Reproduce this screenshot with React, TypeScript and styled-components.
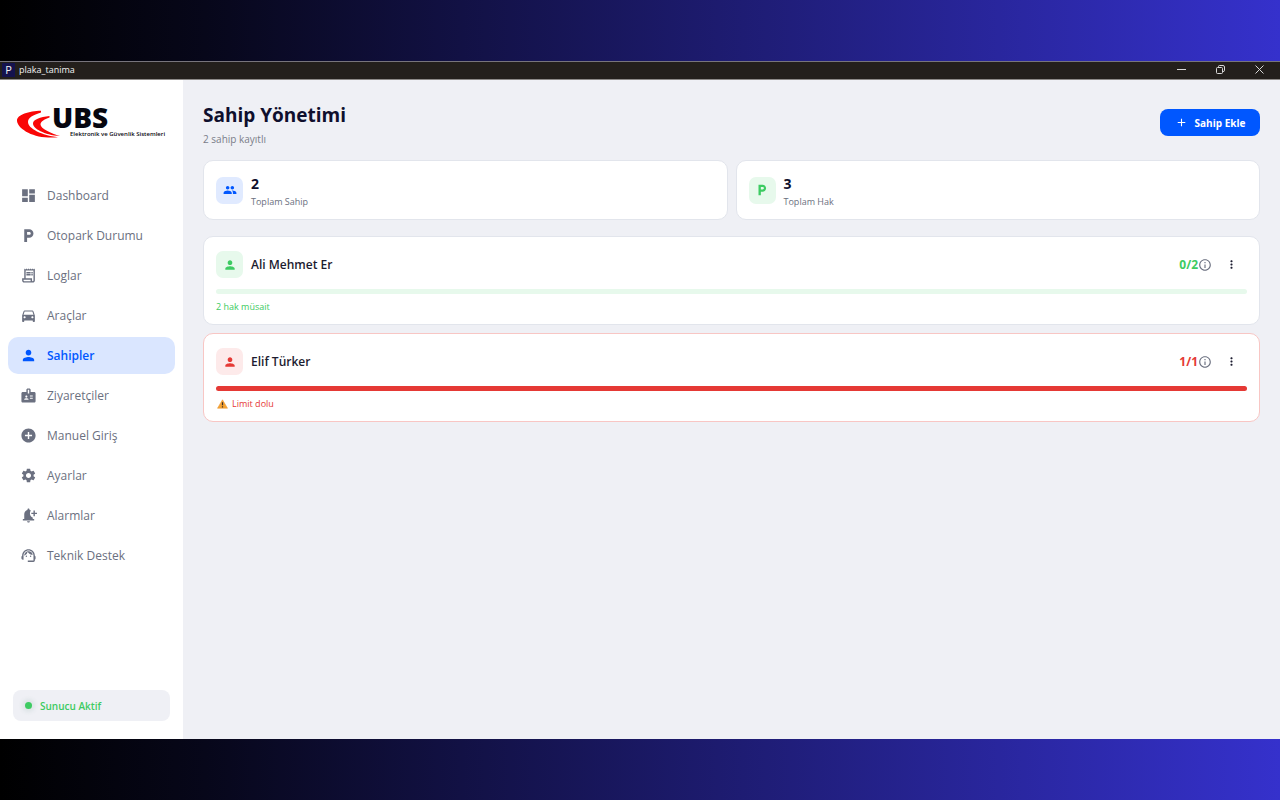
import React from "react";
import styled, { createGlobalStyle, css } from "styled-components";
import {
  MdAdd,
  MdAddCircle,
  MdBadge,
  MdDashboard,
  MdDirectionsCar,
  MdInfoOutline,
  MdLocalParking,
  MdMoreVert,
  MdNotificationAdd,
  MdOutlineReceiptLong,
  MdPeople,
  MdPerson,
  MdSettings,
  MdSupportAgent,
} from "react-icons/md";
import type { IconType } from "react-icons";

const color = {
  ink: "#0f0f2d",
  text: "#1c1c30",
  muted: "#6b7080",
  canvas: "#eff0f5",
  line: "#e2e5ec",
  blue: "#0057ff",
  blueSoft: "#dae6ff",
  green: "#3dcb62",
  greenSoft: "#e7f9ec",
  red: "#e53935",
  redSoft: "#fdeaea",
  redLine: "#f8c6c4",
};

const GlobalStyle = createGlobalStyle`
  *, *::before, *::after { box-sizing: border-box; }
  body {
    margin: 0;
    font-family: "Open Sans", "Noto Sans", sans-serif;
    color: ${color.text};
  }
  h1, h2, p, ul { margin: 0; padding: 0; }
  button { font: inherit; border: 0; background: none; padding: 0; cursor: pointer; }
`;

const Backdrop = styled.div`
  min-height: 100vh;
  display: flex;
  padding: 61px 0;
  background: linear-gradient(90deg, #000000 0%, #07071a 16%, #3531cc 100%);
`;

const AppWindow = styled.div`
  flex: 1;
  min-width: 0;
  display: flex;
  flex-direction: column;
`;

const TitleBar = styled.header`
  height: 19px;
  flex: none;
  display: flex;
  align-items: center;
  justify-content: space-between;
  padding: 0 1px 2px 2px;
  background: #231f1c;
  border-top: 1px solid #77747c;
  border-bottom: 1px solid #8c8987;
  color: #f2f2f2;
`;

const AppName = styled.div`
  display: flex;
  align-items: center;
  gap: 4px;
  font-size: 9px;
  line-height: 14px;
`;

const AppBadge = styled.span`
  width: 13px;
  height: 14px;
  background: #14124e;
  text-align: center;
  font-size: 11px;
  line-height: 14px;
`;

const WindowButtons = styled.div`
  display: flex;
`;

const WindowButton = styled.button`
  width: 39px;
  height: 15px;
  display: grid;
  place-items: center;
  color: #d8d8d8;
`;

const Body = styled.div`
  flex: 1;
  display: flex;
  background: ${color.canvas};
`;

const Sidebar = styled.aside`
  width: 183px;
  flex: none;
  display: flex;
  flex-direction: column;
  background: #ffffff;
`;

const LogoSvg = styled.svg`
  display: block;
  margin: 24px 0 34px 15px;
  overflow: visible;
`;

const NavList = styled.ul`
  list-style: none;
  display: flex;
  flex-direction: column;
  gap: 3px;
  padding: 0 8px;
`;

const NavLink = styled.a<{ $active?: boolean }>`
  height: 37px;
  display: flex;
  align-items: center;
  gap: 10px;
  padding: 0 12px;
  border-radius: 10px;
  font-size: 12px;
  line-height: 16px;
  text-decoration: none;
  color: ${color.muted};
  ${(p) =>
    p.$active &&
    css`
      background: ${color.blueSoft};
      color: ${color.blue};
      font-weight: 600;
    `}
`;

const ServerStatus = styled.div`
  height: 31px;
  margin: auto 13px 18px;
  display: flex;
  align-items: center;
  gap: 8px;
  padding: 0 12px;
  border-radius: 8px;
  background: ${color.canvas};
  color: ${color.green};
  font-size: 10px;
  font-weight: 600;
`;

const StatusDot = styled.span`
  width: 7px;
  height: 7px;
  border-radius: 50%;
  background: ${color.green};
  box-shadow: 0 0 4px 3px rgba(61, 120, 98, 0.1);
`;

const Main = styled.main`
  flex: 1;
  min-width: 0;
  padding: 21px 20px;
`;

const PageHeader = styled.div`
  display: flex;
  align-items: flex-start;
  justify-content: space-between;
  padding-bottom: 11px;
`;

const PageTitle = styled.h1`
  font-size: 19px;
  line-height: 28px;
  font-weight: 700;
  color: ${color.ink};
`;

const PageSubtitle = styled.p`
  font-size: 10px;
  line-height: 20px;
  color: #7a7d89;
`;

const AddButton = styled.button`
  width: 100px;
  height: 27px;
  margin-top: 8px;
  display: flex;
  align-items: center;
  justify-content: center;
  gap: 7px;
  border-radius: 8px;
  background: ${color.blue};
  color: #ffffff;
  font-size: 10px;
  font-weight: 700;
`;

const Stats = styled.section`
  display: grid;
  grid-template-columns: 1fr 1fr;
  gap: 8px;
  margin-bottom: 16px;
`;

const Card = styled.article<{ $danger?: boolean }>`
  background: #ffffff;
  border: 1px solid ${(p) => (p.$danger ? color.redLine : color.line)};
  border-radius: 10px;
  padding: 0 12px;
`;

const StatCard = styled(Card)`
  height: 60px;
  display: flex;
  align-items: center;
  gap: 8px;
`;

const StatText = styled.div`
  padding-top: 6px;
`;

const StatValue = styled.p`
  font-size: 14px;
  line-height: 18px;
  font-weight: 700;
  color: ${color.ink};
`;

const StatLabel = styled.p`
  font-size: 9px;
  line-height: 18px;
  color: ${color.muted};
`;

type Tone = "blue" | "green" | "red";

const IconTile = styled.span<{ $tone: Tone }>`
  width: 27px;
  height: 27px;
  flex: none;
  display: grid;
  place-items: center;
  border-radius: 7px;
  color: ${(p) => color[p.$tone]};
  background: ${(p) =>
    ({ blue: "#e0eaff", green: color.greenSoft, red: color.redSoft })[p.$tone]};
`;

const OwnerList = styled.section`
  display: flex;
  flex-direction: column;
  gap: 8px;
`;

const OwnerCard = styled(Card)`
  height: 89px;
  padding-top: 14px;
`;

const OwnerRow = styled.div`
  display: flex;
  align-items: center;
  gap: 8px;
`;

const OwnerName = styled.h2`
  flex: 1;
  font-size: 12px;
  line-height: 16px;
  font-weight: 600;
`;

const Usage = styled.span<{ $tone: Tone }>`
  display: flex;
  align-items: center;
  font-size: 12px;
  line-height: 16px;
  font-weight: 700;
  color: ${(p) => color[p.$tone]};
`;

const IconButton = styled.button<{ $menu?: boolean }>`
  display: grid;
  place-items: center;
  width: ${(p) => (p.$menu ? 22 : 14)}px;
  height: 20px;
  margin-right: ${(p) => (p.$menu ? 5 : 0)}px;
  color: ${(p) => (p.$menu ? color.text : color.muted)};
`;

const Track = styled.div<{ $tone: Tone }>`
  height: 5px;
  margin-top: 11px;
  overflow: hidden;
  border-radius: 3px;
  background: ${(p) => (p.$tone === "red" ? color.redSoft : color.greenSoft)};
`;

const Fill = styled.div<{ $tone: Tone }>`
  height: 100%;
  background: ${(p) => color[p.$tone]};
`;

const Note = styled.p<{ $tone: Tone }>`
  display: flex;
  align-items: center;
  gap: 4px;
  margin-top: 6px;
  font-size: 9px;
  line-height: 14px;
  color: ${(p) => color[p.$tone]};
`;

const WarningSvg = styled.svg`
  margin-left: 1px;
`;

const Logo = () => (
  <LogoSvg width="152" height="39" viewBox="0 0 152 39" role="img" aria-label="UBS">
    <g fill="#f90606">
      <path d="M26 6.700C14 7 2 10.500 2 16.500C2 24 16 33 33 33.500C37 33.600 40 33.500 43 33.200C27 31.500 13 24.500 13 18C13 13.500 18 11 26 8.500Z" />
      <path d="M34.500 12C25 13 18 15.500 18 19.500C18 24.500 29 31 45 32C36 29.500 25.500 24.500 25.500 20.500C25.500 17.500 29 15.500 34.500 13.500Z" />
    </g>
    <text x="37" y="24" fontSize="28" fontWeight="800" fill="#06060f">UBS</text>
    <text x="55" y="32" fontSize="6" fontWeight="600" fill="#06060f">
      Elektronik ve Güvenlik Sistemleri
    </text>
  </LogoSvg>
);

const WarningIcon = () => (
  <WarningSvg width="11" height="10" viewBox="0 0 22 20" aria-hidden="true">
    <path d="M11 1.500L21 18.500H1Z" fill="#f5a331" stroke="#e8912b" strokeLinejoin="round" />
    <path d="M11 6.500V12.500M11 14.500V17" stroke="#3a2c2c" strokeWidth="2.400" />
  </WarningSvg>
);

const navItems: { label: string; icon: IconType; active?: boolean }[] = [
  { label: "Dashboard", icon: MdDashboard },
  { label: "Otopark Durumu", icon: MdLocalParking },
  { label: "Loglar", icon: MdOutlineReceiptLong },
  { label: "Araçlar", icon: MdDirectionsCar },
  { label: "Sahipler", icon: MdPerson, active: true },
  { label: "Ziyaretçiler", icon: MdBadge },
  { label: "Manuel Giriş", icon: MdAddCircle },
  { label: "Ayarlar", icon: MdSettings },
  { label: "Alarmlar", icon: MdNotificationAdd },
  { label: "Teknik Destek", icon: MdSupportAgent },
];

const stats: { value: number; label: string; icon: IconType; tone: Tone }[] = [
  { value: 2, label: "Toplam Sahip", icon: MdPeople, tone: "blue" },
  { value: 3, label: "Toplam Hak", icon: MdLocalParking, tone: "green" },
];

const owners = [
  { name: "Ali Mehmet Er", used: 0, limit: 2 },
  { name: "Elif Türker", used: 1, limit: 1 },
];

export default function App() {
  return (
    <Backdrop>
      <GlobalStyle />
      <AppWindow>
        <TitleBar>
          <AppName>
            <AppBadge>P</AppBadge>
            plaka_tanima
          </AppName>
          <WindowButtons>
            <WindowButton aria-label="Simge durumuna küçült">
              <svg width="9" height="9" viewBox="0 0 9 9" stroke="currentColor">
                <path d="M0 4.500H9" />
              </svg>
            </WindowButton>
            <WindowButton aria-label="Önceki boyut">
              <svg width="9" height="9" viewBox="0 0 9 9" fill="none" stroke="currentColor">
                <rect x="0.500" y="2.500" width="6" height="6" rx="1" />
                <path d="M2.500 2.500V1.500Q2.500 0.500 3.500 0.500H7Q8.500 0.500 8.500 2V5.500Q8.500 6.500 7 6.500" />
              </svg>
            </WindowButton>
            <WindowButton aria-label="Kapat">
              <svg width="9" height="9" viewBox="0 0 9 9" stroke="currentColor">
                <path d="M0.500 0.500L8.500 8.500M8.500 0.500L0.500 8.500" />
              </svg>
            </WindowButton>
          </WindowButtons>
        </TitleBar>
        <Body>
          <Sidebar>
            <Logo />
            <nav>
              <NavList>
                {navItems.map(({ label, icon: Icon, active }) => (
                  <li key={label}>
                    <NavLink href="#" $active={active} aria-current={active ? "page" : undefined}>
                      <Icon size={17} />
                      {label}
                    </NavLink>
                  </li>
                ))}
              </NavList>
            </nav>
            <ServerStatus>
              <StatusDot />
              Sunucu Aktif
            </ServerStatus>
          </Sidebar>
          <Main>
            <PageHeader>
              <div>
                <PageTitle>Sahip Yönetimi</PageTitle>
                <PageSubtitle>2 sahip kayıtlı</PageSubtitle>
              </div>
              <AddButton>
                <MdAdd size={13} />
                Sahip Ekle
              </AddButton>
            </PageHeader>
            <Stats>
              {stats.map(({ value, label, icon: Icon, tone }) => (
                <StatCard key={label}>
                  <IconTile $tone={tone}>
                    <Icon size={14} />
                  </IconTile>
                  <StatText>
                    <StatValue>{value}</StatValue>
                    <StatLabel>{label}</StatLabel>
                  </StatText>
                </StatCard>
              ))}
            </Stats>
            <OwnerList>
              {owners.map(({ name, used, limit }) => {
                const full = used >= limit;
                const tone: Tone = full ? "red" : "green";
                return (
                  <OwnerCard key={name} $danger={full}>
                    <OwnerRow>
                      <IconTile $tone={tone}>
                        <MdPerson size={14} />
                      </IconTile>
                      <OwnerName>{name}</OwnerName>
                      <Usage $tone={tone}>
                        {`${used}/${limit}`}
                        <IconButton aria-label="Bilgi">
                          <MdInfoOutline size={14} />
                        </IconButton>
                      </Usage>
                      <IconButton $menu aria-label="Menü">
                        <MdMoreVert size={13} />
                      </IconButton>
                    </OwnerRow>
                    <Track $tone={tone}>
                      <Fill $tone={tone} style={{ width: `${(used / limit) * 100}%` }} />
                    </Track>
                    <Note $tone={tone}>
                      {full && <WarningIcon />}
                      {full ? "Limit dolu" : `${limit - used} hak müsait`}
                    </Note>
                  </OwnerCard>
                );
              })}
            </OwnerList>
          </Main>
        </Body>
      </AppWindow>
    </Backdrop>
  );
}
